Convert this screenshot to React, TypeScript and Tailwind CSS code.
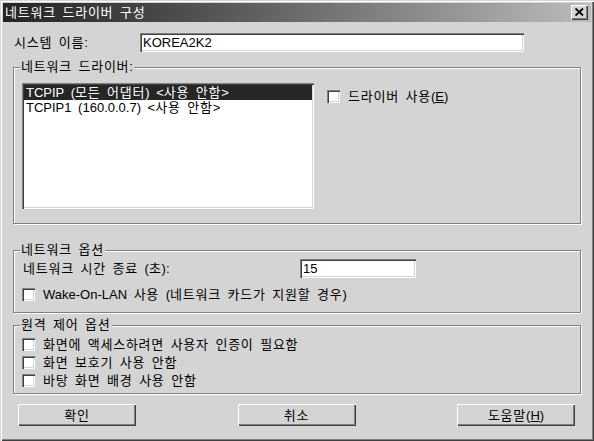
import React from "react";

function T({ children }: { children: string }) {
  const parts = children.split(/([\uAC00-\uD7A3]+)/);
  return (
    <>
      {parts.map((p, i) =>
        /[\uAC00-\uD7A3]/.test(p) ? (
          <span key={i} className="tracking-[0.75px]">
            {p}
          </span>
        ) : (
          <React.Fragment key={i}>{p}</React.Fragment>
        )
      )}
    </>
  );
}

function Check({ className = "" }: { className?: string }) {
  return (
    <span
      className={
        "inline-block w-[13px] h-[13px] shrink-0 bg-white shadow-[inset_1px_1px_0_#808080,inset_2px_2px_0_#404040,inset_-1px_-1px_0_#ffffff,inset_-2px_-2px_0_#d4d4d4] " +
        className
      }
    />
  );
}

function Group({
  label,
  className = "",
  children,
}: {
  label: string;
  className?: string;
  children?: React.ReactNode;
}) {
  return (
    <div
      className={
        "relative w-[568px] border border-[#808080] shadow-[inset_1px_1px_0_#ffffff,1px_1px_0_#ffffff] " +
        className
      }
    >
      <span className="absolute left-[6px] top-[-9px] bg-[#d4d4d4] px-[1px] leading-[15px] whitespace-nowrap">
        <T>{label}</T>
      </span>
      {children}
    </div>
  );
}

function Button({ children }: { children: React.ReactNode }) {
  return (
    <div className="w-[118px] h-[22px] flex items-center justify-center bg-[#d4d4d4] shadow-[inset_1px_1px_0_#ffffff,inset_-1px_-1px_0_#404040,inset_-2px_-2px_0_#808080] leading-[15px]">
      {children}
    </div>
  );
}

export default function App() {
  return (
    <div
      className="w-[594px] h-[441px] bg-[#d4d4d4] p-[3px] text-black text-[13px] leading-[15px] [word-spacing:3px] shadow-[inset_1px_1px_0_#d4d4d4,inset_2px_2px_0_#ffffff,inset_-1px_-1px_0_#404040,inset_-2px_-2px_0_#808080] overflow-hidden"
      style={{ fontFamily: '"Liberation Sans", "Noto Sans CJK KR", sans-serif' }}
    >
      {/* Title bar */}
      <div className="h-[19px] flex items-center justify-between bg-gradient-to-r from-[#242424] to-[#bcbcbc]">
        <span className="pl-[2px] text-white whitespace-nowrap">
          <T>네트워크 드라이버 구성</T>
        </span>
        <div className="mr-[3px] w-[17px] h-[15px] flex items-center justify-center bg-[#d4d4d4] shadow-[inset_1px_1px_0_#ffffff,inset_-1px_-1px_0_#404040,inset_-2px_-2px_0_#808080]">
          <svg width="9" height="8" viewBox="0 0 9 8" className="mb-[1px]">
            <path d="M0.5 0.5 L8 7.5 M8 0.5 L0.5 7.5" stroke="#000" strokeWidth="1.8" />
          </svg>
        </div>
      </div>

      <div className="pl-[10px]">
        {/* System name */}
        <div className="mt-[11px] flex items-center h-[19px]">
          <span className="w-[127px] pl-[1px] whitespace-nowrap">
            <T>시스템 이름:</T>
          </span>
          <div className="w-[384px] h-[19px] bg-white flex items-center pl-[3px] shadow-[inset_1px_1px_0_#808080,inset_2px_2px_0_#404040,inset_-1px_-1px_0_#ffffff,inset_-2px_-2px_0_#d4d4d4]">
            KOREA2K2
          </div>
        </div>

        {/* Group 1 */}
        <Group label="네트워크 드라이버:" className="mt-[15px] h-[157px]">
          <div className="flex pl-[8px] pt-[15px]">
            <div className="w-[292px] h-[126px] bg-white p-[2px] shadow-[inset_1px_1px_0_#808080,inset_2px_2px_0_#404040,inset_-1px_-1px_0_#ffffff,inset_-2px_-2px_0_#d4d4d4]">
              <div className="h-[15px] bg-[#262626] text-white pl-[2px] whitespace-nowrap">
                <T>{"TCPIP (모든 어댑터) <사용 안함>"}</T>
              </div>
              <div className="h-[15px] pl-[2px] whitespace-nowrap">
                <T>{"TCPIP1 (160.0.0.7) <사용 안함>"}</T>
              </div>
            </div>
            <div className="ml-[13px] mt-[6px] h-[15px] flex items-center">
              <Check />
              <span className="ml-[8px] whitespace-nowrap">
                <T>드라이버 사용(</T>
                <span className="underline">E</span>)
              </span>
            </div>
          </div>
        </Group>

        {/* Group 2 */}
        <Group label="네트워크 옵션" className="mt-[26px] h-[63px]">
          <div className="pt-[8px] pl-[8px]">
            <div className="flex items-center h-[19px]">
              <span className="w-[278px] pl-[1px] whitespace-nowrap">
                <T>네트워크 시간 종료 (초):</T>
              </span>
              <div className="w-[116px] h-[19px] bg-white flex items-center pl-[3px] shadow-[inset_1px_1px_0_#808080,inset_2px_2px_0_#404040,inset_-1px_-1px_0_#ffffff,inset_-2px_-2px_0_#d4d4d4]">
                15
              </div>
            </div>
            <div className="mt-[9px] h-[15px] flex items-center">
              <Check />
              <span className="ml-[8px] whitespace-nowrap">
                <T>Wake-On-LAN 사용 (네트워크 카드가 지원할 경우)</T>
              </span>
            </div>
          </div>
        </Group>

        {/* Group 3 */}
        <Group label="원격 제어 옵션" className="mt-[12px] h-[69px]">
          <div className="pt-[11px] pl-[8px] flex flex-col gap-[3px]">
            <div className="h-[15px] flex items-center">
              <Check />
              <span className="ml-[8px] whitespace-nowrap">
                <T>화면에 액세스하려면 사용자 인증이 필요함</T>
              </span>
            </div>
            <div className="h-[15px] flex items-center">
              <Check />
              <span className="ml-[8px] whitespace-nowrap">
                <T>화면 보호기 사용 안함</T>
              </span>
            </div>
            <div className="h-[15px] flex items-center">
              <Check />
              <span className="ml-[8px] whitespace-nowrap">
                <T>바탕 화면 배경 사용 안함</T>
              </span>
            </div>
          </div>
        </Group>

        {/* Buttons */}
        <div className="mt-[10px] flex justify-between w-[557px] ml-[5px]">
          <Button>
            <T>확인</T>
          </Button>
          <Button>
            <T>취소</T>
          </Button>
          <Button>
            <T>도움말(</T>
            <span className="underline">H</span>)
          </Button>
        </div>
      </div>
    </div>
  );
}
